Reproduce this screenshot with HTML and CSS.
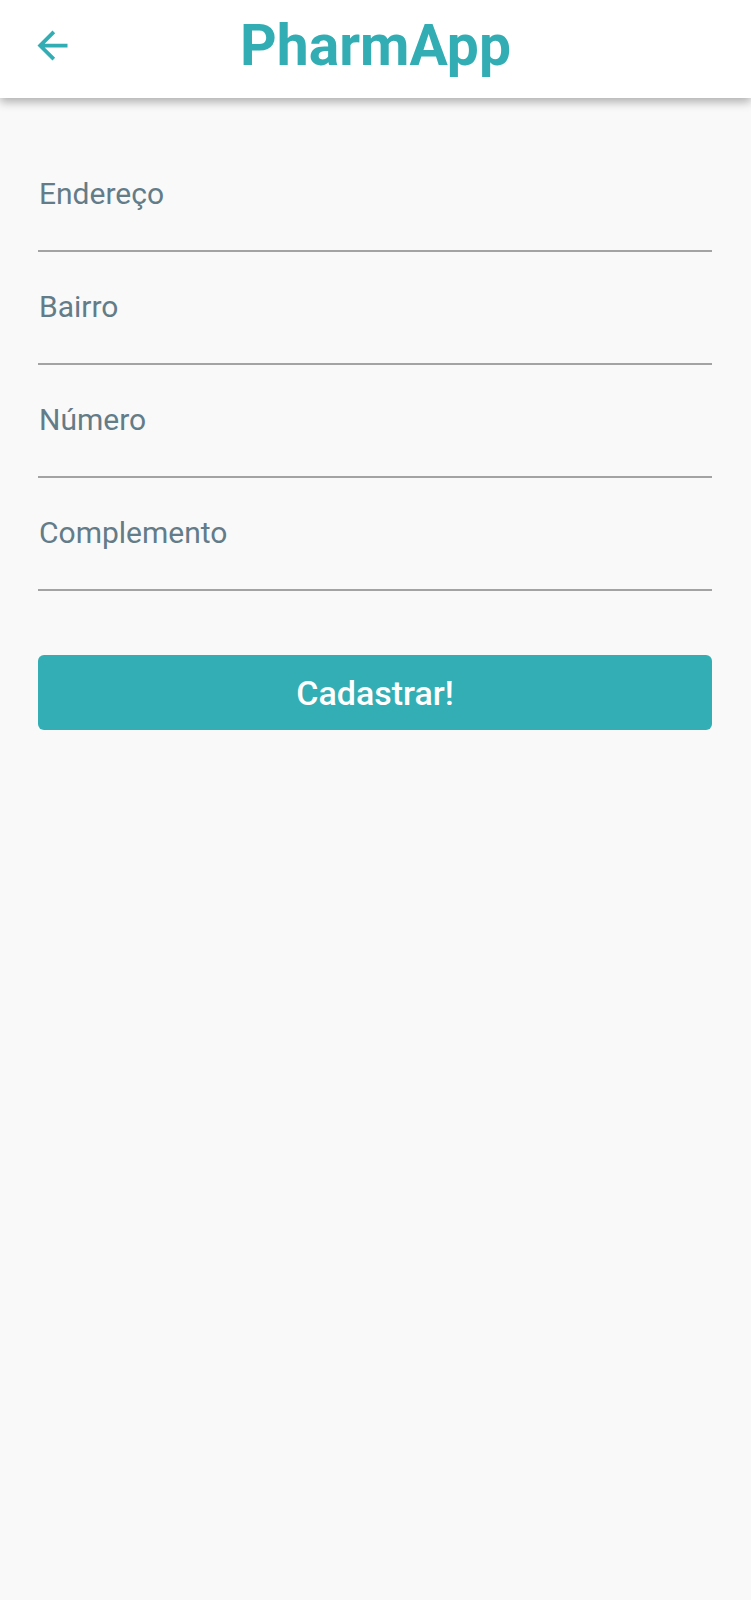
FILE: index.html
```html
<!DOCTYPE html>
<html lang="pt">
<head>
<meta charset="utf-8">
<title>PharmApp</title>
<link rel="stylesheet" href="styles.css">
</head>
<body>
<header class="appbar">
  <button class="back" aria-label="Voltar">
    <svg width="45" height="45" viewBox="0 0 24 24"><path d="M20 11H7.83l5.59-5.59L12 4l-8 8 8 8 1.41-1.41L7.83 13H20v-2z" fill="currentColor"/></svg>
  </button>
  <h1 class="title">PharmApp</h1>
</header>
<main class="form">
  <div class="field"><span class="label">Endereço</span></div>
  <div class="field"><span class="label">Bairro</span></div>
  <div class="field"><span class="label">Número</span></div>
  <div class="field"><span class="label">Complemento</span></div>
  <button class="submit">Cadastrar!</button>
</main>
</body>
</html>
```
FILE: styles.css
```css
html, body {
  margin: 0;
  padding: 0;
}
body {
  background: #f9f9f9;
  font-family: Roboto, "Liberation Sans", sans-serif;
  min-height: 1600px;
}
.appbar {
  position: relative;
  height: 98px;
  background: #ffffff;
  box-shadow: 0 4px 9px rgba(0, 0, 0, 0.3);
  display: flex;
  align-items: center;
  justify-content: center;
}
.back {
  position: absolute;
  left: 30px;
  top: 23px;
  width: 45px;
  height: 45px;
  padding: 0;
  border: 0;
  background: none;
  color: #32adb3;
  display: block;
}
.back svg {
  display: block;
}
.title {
  margin: 0;
  font-size: 57px;
  font-weight: 700;
  color: #32adb3;
  line-height: 1;
  position: relative;
  top: -4px;
}
.form {
  padding: 41px 39px 0 38px;
  display: flex;
  flex-direction: column;
}
.field {
  padding: 37px 0 38px 1px;
  border-bottom: 2px solid #a3a3a3;
}
.label {
  display: block;
  font-size: 30px;
  line-height: 36px;
  color: #637c88;
}
.submit {
  margin-top: 64px;
  height: 75px;
  border: 0;
  border-radius: 6px;
  background: #32aeb4;
  color: #ffffff;
  font-family: Roboto, "Liberation Sans", sans-serif;
  font-size: 34px;
  font-weight: 500;
  padding: 0;
}
```
